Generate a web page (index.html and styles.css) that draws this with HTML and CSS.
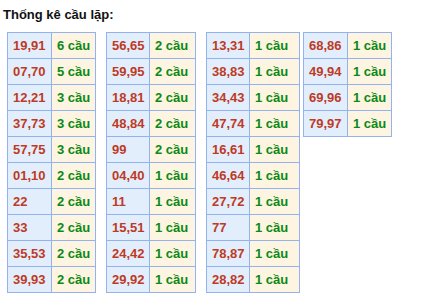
FILE: index.html
```html
<!DOCTYPE html>
<html lang="vi">
<head>
<meta charset="utf-8">
<link rel="stylesheet" href="styles.css">
</head>
<body>
<div class="page">
  <h3 class="title">Thống kê cầu lặp:</h3>
  <div class="tables">
    <table class="tk t1">
      <tr><td class="num">19,91</td><td class="cnt">6 cầu</td></tr>
      <tr><td class="num">07,70</td><td class="cnt">5 cầu</td></tr>
      <tr><td class="num">12,21</td><td class="cnt">3 cầu</td></tr>
      <tr><td class="num">37,73</td><td class="cnt">3 cầu</td></tr>
      <tr><td class="num">57,75</td><td class="cnt">3 cầu</td></tr>
      <tr><td class="num">01,10</td><td class="cnt">2 cầu</td></tr>
      <tr><td class="num">22</td><td class="cnt">2 cầu</td></tr>
      <tr><td class="num">33</td><td class="cnt">2 cầu</td></tr>
      <tr><td class="num">35,53</td><td class="cnt">2 cầu</td></tr>
      <tr><td class="num">39,93</td><td class="cnt">2 cầu</td></tr>
    </table>
    <table class="tk t2">
      <tr><td class="num">56,65</td><td class="cnt">2 cầu</td></tr>
      <tr><td class="num">59,95</td><td class="cnt">2 cầu</td></tr>
      <tr><td class="num">18,81</td><td class="cnt">2 cầu</td></tr>
      <tr><td class="num">48,84</td><td class="cnt">2 cầu</td></tr>
      <tr><td class="num">99</td><td class="cnt">2 cầu</td></tr>
      <tr><td class="num">04,40</td><td class="cnt">1 cầu</td></tr>
      <tr><td class="num">11</td><td class="cnt">1 cầu</td></tr>
      <tr><td class="num">15,51</td><td class="cnt">1 cầu</td></tr>
      <tr><td class="num">24,42</td><td class="cnt">1 cầu</td></tr>
      <tr><td class="num">29,92</td><td class="cnt">1 cầu</td></tr>
    </table>
    <table class="tk t3">
      <tr><td class="num">13,31</td><td class="cnt">1 cầu</td></tr>
      <tr><td class="num">38,83</td><td class="cnt">1 cầu</td></tr>
      <tr><td class="num">34,43</td><td class="cnt">1 cầu</td></tr>
      <tr><td class="num">47,74</td><td class="cnt">1 cầu</td></tr>
      <tr><td class="num">16,61</td><td class="cnt">1 cầu</td></tr>
      <tr><td class="num">46,64</td><td class="cnt">1 cầu</td></tr>
      <tr><td class="num">27,72</td><td class="cnt">1 cầu</td></tr>
      <tr><td class="num">77</td><td class="cnt">1 cầu</td></tr>
      <tr><td class="num">78,87</td><td class="cnt">1 cầu</td></tr>
      <tr><td class="num">28,82</td><td class="cnt">1 cầu</td></tr>
    </table>
    <table class="tk t4">
      <tr><td class="num">68,86</td><td class="cnt">1 cầu</td></tr>
      <tr><td class="num">49,94</td><td class="cnt">1 cầu</td></tr>
      <tr><td class="num">69,96</td><td class="cnt">1 cầu</td></tr>
      <tr><td class="num">79,97</td><td class="cnt">1 cầu</td></tr>
    </table>
  </div>
</div>
</body>
</html>
```
FILE: styles.css
```css
html, body {
  margin: 0;
  padding: 0;
  background: #ffffff;
}
.page {
  padding: 7px 0 0 3px;
  font-family: "Liberation Sans", Arial, sans-serif;
}
.title {
  margin: 0;
  font-size: 13px;
  line-height: 15px;
  font-weight: bold;
  color: #111111;
}
.tables {
  display: flex;
  align-items: flex-start;
  margin: 10px 0 0 4px;
}
.tk {
  border-collapse: collapse;
  table-layout: fixed;
  margin-right: 10px;
}
.tk td {
  border: 1px solid #93b3ef;
  height: 25px;
  padding: 0 0 0 5px;
  font-size: 13px;
  font-weight: bold;
  line-height: 25px;
  white-space: nowrap;
  box-sizing: border-box;
}
.tk .num {
  background: #e3eefd;
  color: #bd3a24;
}
.tk .cnt {
  background: #fef4e2;
  color: #0a8a12;
}
.t1 .num { width: 44px; }
.t1 .cnt { width: 44px; }
.t2 .num { width: 43px; }
.t2 .cnt { width: 46px; }
.t3 { margin-right: 3px; }
.t3 .num { width: 43px; }
.t3 .cnt { width: 50px; }
.t4 .num { width: 44px; }
.t4 .cnt { width: 44px; }
```
